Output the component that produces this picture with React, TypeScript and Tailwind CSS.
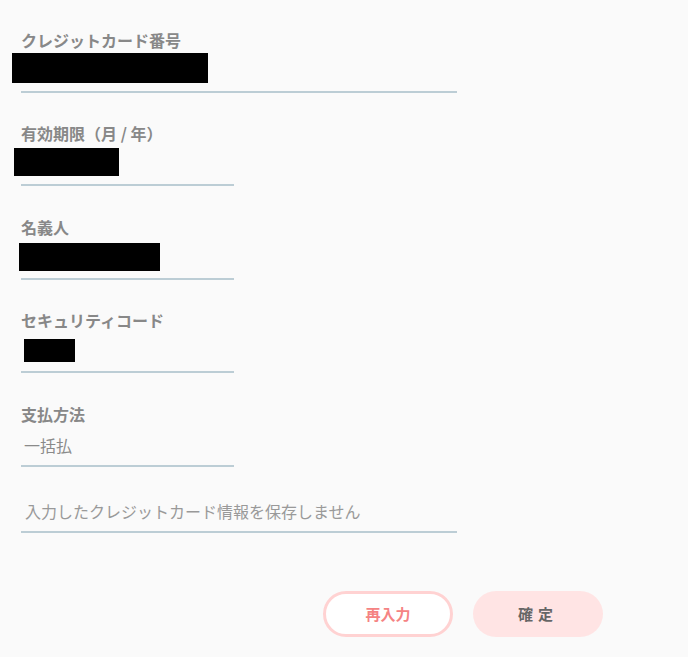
import * as React from "react"

interface Field {
  label: string
  wide?: boolean
  value?: string
  redact?: { left: number; top: number; w: number; h: number }
  mt: string
}

const fields: Field[] = [
  { label: "クレジットカード番号", wide: true, redact: { left: -9, top: 1, w: 196, h: 30 }, mt: "mt-[28px]" },
  { label: "有効期限（月 / 年）", redact: { left: -7, top: 3, w: 105, h: 28 }, mt: "mt-[28px]" },
  { label: "名義人", redact: { left: -2, top: 4, w: 141, h: 28 }, mt: "mt-[29px]" },
  { label: "セキュリティコード", redact: { left: 3, top: 7, w: 51, h: 23 }, mt: "mt-[28px]" },
  { label: "支払方法", value: "一括払", mt: "mt-[29px]" },
]

export default function App() {
  return (
    <div
      className="min-h-[657px] w-full bg-[#fafafa] pl-[21px]"
      style={{ fontFamily: '"Noto Sans CJK JP", "Noto Sans", sans-serif' }}
    >
      <div className="flex flex-col">
        {fields.map((f) => (
          <div key={f.label} className={f.mt}>
            <p className="text-[16px] font-bold leading-6 text-[#888888]">{f.label}</p>
            <div
              className={`relative flex h-[41px] items-center border-b-2 border-[#bccdd5] pb-[2px] ${
                f.wide ? "w-[436px]" : "w-[213px]"
              }`}
            >
              {f.value && (
                <span className="pl-[3px] text-[16px] leading-6 text-[#8a8a8a]">{f.value}</span>
              )}
              {f.redact && (
                <span
                  className="absolute bg-black"
                  style={{ left: f.redact.left, top: f.redact.top, width: f.redact.w, height: f.redact.h }}
                />
              )}
            </div>
          </div>
        ))}

        {/* notice */}
        <div className="mt-[28px] h-[38px] w-[436px] border-b-2 border-[#bccdd5] pl-1 pt-1">
          <span className="text-[16px] leading-6 text-[#999999]">入力したクレジットカード情報を保存しません</span>
        </div>

        {/* actions */}
        <div className="mt-[58px] flex gap-[20px] pl-[302px]">
          <button className="flex h-[46px] w-[130px] items-center justify-center rounded-full border-[3px] border-[#ffd2d2] bg-white text-[15px] font-bold text-[#f58383]">
            再入力
          </button>
          <button className="flex h-[46px] w-[130px] items-center justify-center rounded-full bg-[#ffe4e4] text-[15px] font-bold tracking-[5px] text-[#666666]">
            確定
          </button>
        </div>
      </div>
    </div>
  )
}
